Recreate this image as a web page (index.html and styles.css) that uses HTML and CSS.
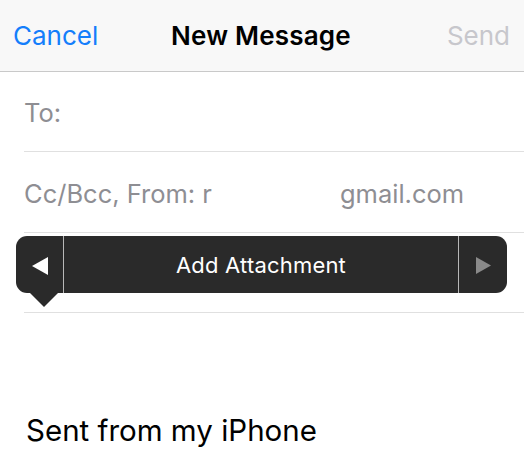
FILE: index.html
```html
<!DOCTYPE html>
<html>
<head>
<meta charset="utf-8">
<link rel="stylesheet" href="styles.css">
</head>
<body>
<div class="screen">
  <header class="nav">
    <span class="nav-btn cancel">Cancel</span>
    <span class="nav-title">New Message</span>
    <span class="nav-btn send">Send</span>
  </header>
  <div class="field"><span class="label">To:</span></div>
  <div class="field from"><span class="label">Cc/Bcc, From: r<span class="gap"></span>gmail.com</span></div>
  <div class="field subject">
    <div class="menu">
      <div class="seg seg-arrow">
        <svg width="16" height="18" viewBox="0 0 16 18"><path d="M16 0 L16 18 L0 9 Z" fill="#ffffff"/></svg>
      </div>
      <div class="seg seg-main">Add Attachment</div>
      <div class="seg seg-arrow right">
        <svg width="15" height="17" viewBox="0 0 15 17"><path d="M0 0 L0 17 L15 8.5 Z" fill="#8a8a8a"/></svg>
      </div>
      <div class="nub"></div>
    </div>
  </div>
  <div class="body-text">Sent from my iPhone</div>
</div>
</body>
</html>
```
FILE: styles.css
```css
* { box-sizing: border-box; }
html, body { margin: 0; padding: 0; background: #ffffff; }
body { font-family: Inter, "Liberation Sans", sans-serif; width: 524px; height: 450px; overflow: hidden; }
.screen { position: relative; }
.nav {
  height: 72px;
  background: #f8f8f8;
  border-bottom: 1px solid #c9c9c9;
  display: flex;
  align-items: center;
  justify-content: space-between;
  padding: 0 14px 0 13px;
  font-size: 26px;
  position: relative;
}
.cancel { color: #147efb; }
.send { color: #c7c7cc; }
.nav-title {
  position: absolute;
  left: 0; right: 0;
  text-align: center;
  font-weight: 600;
  color: #000;
  pointer-events: none;
  padding-right: 2px;
  letter-spacing: 0.2px;
}
.field {
  margin-left: 24px;
  height: 80px;
  border-bottom: 1px solid #e0e0e0;
  display: flex;
  align-items: center;
  font-size: 25.5px;
  color: #8e8e93;
}
.field.from { height: 81px; }
.field .label { position: relative; top: 1px; }
.gap { display: inline-block; width: 128px; }
.subject { position: relative; height: 80px; }
.menu {
  position: absolute;
  left: -8px;
  top: 3px;
  width: 491px;
  height: 57px;
  background: #2a2a2a;
  border-radius: 11px;
  display: flex;
  color: #fff;
}
.seg { display: flex; align-items: center; justify-content: center; height: 100%; }
.seg-arrow { width: 47px; padding-top: 2px; }
.seg-arrow.right { width: 49px; border-left: 1px solid #b8b8b8; }
.seg-main {
  flex: 1;
  border-left: 1px solid #b8b8b8;
  font-size: 22px;
  letter-spacing: 0.2px;
  padding-top: 1px;
}
.nub {
  position: absolute;
  left: 13px;
  top: 56px;
  width: 0; height: 0;
  border-left: 15px solid transparent;
  border-right: 15px solid transparent;
  border-top: 15px solid #2a2a2a;
}
.body-text {
  margin: 99px 0 0 26px;
  font-size: 29.5px;
  color: #000;
}
```
